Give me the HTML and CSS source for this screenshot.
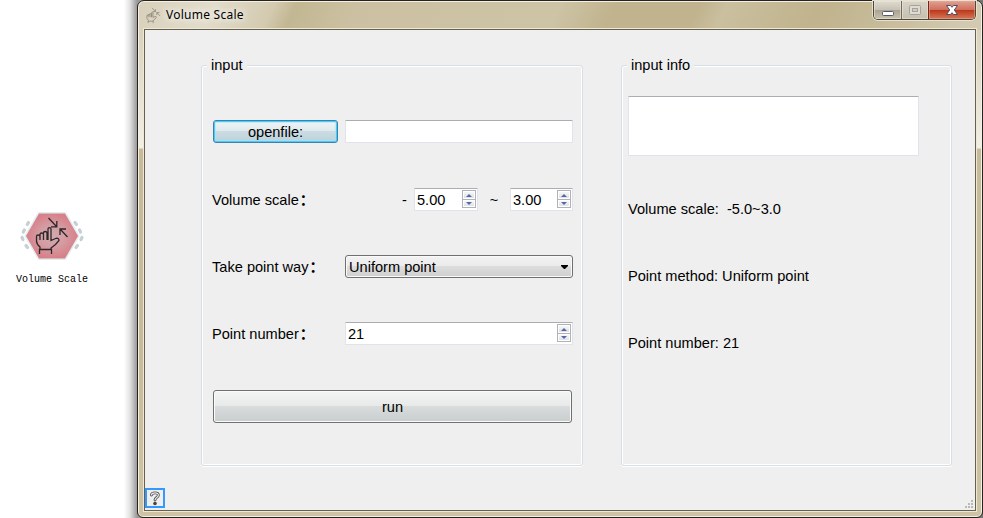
FILE: index.html
```html
<!DOCTYPE html>
<html lang="en">
<head>
<meta charset="utf-8">
<title>Volume Scale</title>
<link rel="stylesheet" href="styles.css">
</head>
<body>
<svg class="defs" width="0" height="0" aria-hidden="true">
  <symbol id="pinch" viewBox="0 0 36 40">
    <g fill="none" stroke="currentColor" stroke-width="1.3">
      <path d="M15.500 2L23.500 10.500M23.800 5V10.800H18"/>
      <path d="M34.500 21L27.500 13.500M27 19V13H33"/>
      <path d="M6.500 38V33.500H18.500V38M7 33.500V31Q3.500 28 3.500 25V20.500Q3.500 19 5.200 19T7 20.500V24M7 20V18.500Q7 17 8.700 17T10.500 18.500V24M10.500 18.500V17Q10.500 15.500 12.200 15.500T14 17V24M15 24V13Q15 11.700 16.500 11.700T18 13V24.500L22.500 22.500Q26 21.500 26 24.500L22.500 28.500 18 32V33.500"/>
    </g>
  </symbol>
</svg>
<div class="desktop">
  <div class="shortcut">
    <svg class="tile" width="70" height="54" viewBox="0 0 70 54">
      <defs>
        <radialGradient id="rose"><stop offset="0" stop-color="#d0abb0"/><stop offset=".5" stop-color="#d49ca2"/><stop offset="1" stop-color="#d87f88"/></radialGradient>
      </defs>
      <path d="M22 4.500H48L61 27 48 49.500H22L9 27Z" fill="#e3edf0" stroke="#e3edf0" stroke-width="3" stroke-linejoin="round"/>
      <path d="M22 4.500H48L61 27 48 49.500H22L9 27Z" fill="url(#rose)"/>
      <g stroke="#c6cfd4" stroke-width="3.200" stroke-linecap="round">
        <path d="M10.300 15.500L11.500 13.500M6.300 23L7.300 21M5 28.500L6 30.500M9 36.500L10.500 38.500M58 13.500L59.500 15.500M62.500 21L63.500 23M64 30.500L65 28.500M59 38.500L60.500 36.500"/>
      </g>
      <svg x="16" y="7" width="36" height="40" color="#2d2728"><use href="#pinch"/></svg>
    </svg>
    <span>Volume Scale</span>
  </div>
  <div class="window">
    <header class="titlebar">
      <svg class="app-icon" width="16" height="17" viewBox="0 0 36 40"><use href="#pinch"/></svg>
      <h1>Volume Scale</h1>
      <div class="controls">
        <span class="min"><svg width="12" height="5"><rect x=".5" y=".5" width="11" height="4" rx="1" fill="#fff" stroke="#555770"/></svg></span>
        <span class="max"><svg width="12" height="10"><rect x=".5" y=".5" width="11" height="9" rx="1" fill="#dddbd2" stroke="#a5a29a"/><rect x="3.500" y="3.500" width="5" height="3" fill="#ceccc2" stroke="#a5a29a"/></svg></span>
        <span class="close"><svg width="12" height="10" viewBox="0 0 12 10"><path d="M0.500 .5H4.500L6 2.300 7.500 .5H11.500L8.300 5 11.500 9.500H7.500L6 7.700 4.500 9.500H.5L3.700 5Z" fill="#fff" stroke="#4d4d61"/></svg></span>
      </div>
    </header>
    <main class="client">
      <section class="group form">
        <h2>input</h2>
        <div class="button open">openfile:</div>
        <div class="field"></div>
        <label>Volume scale<b>：</b></label>
        <div class="range">
          <span class="minus">-</span>
          <div class="field spin"><span>5.00</span><i class="steps"><b class="up"></b><b class="down"></b></i></div>
          <span class="tilde">~</span>
          <div class="field spin"><span>3.00</span><i class="steps"><b class="up"></b><b class="down"></b></i></div>
        </div>
        <label>Take point way<b>：</b></label>
        <div class="button combo"><span>Uniform point</span><svg width="7" height="4"><path d="M0 0H7V1L4 4H3L0 1Z"/></svg></div>
        <label>Point number<b>：</b></label>
        <div class="field spin"><span>21</span><i class="steps"><b class="up"></b><b class="down"></b></i></div>
        <div class="button run">run</div>
      </section>
      <section class="group info">
        <h2>input info</h2>
        <div class="field"></div>
        <p>Volume scale:&nbsp; -5.0~3.0</p>
        <p>Point method: Uniform point</p>
        <p>Point number: 21</p>
      </section>
      <footer class="status">
        <span class="help"><svg width="12" height="15" viewBox="0 0 12 15"><g fill="none" stroke-linecap="round"><path d="M2.500 4Q2.500 1.800 6 1.800T9.300 4.200C9.300 6.500 6 6.500 6 9" stroke="#444" stroke-width="2.800"/><path d="M2.500 4Q2.500 1.800 6 1.800T9.300 4.200C9.300 6.500 6 6.500 6 9" stroke="#eee" stroke-width="1.200"/></g><circle cx="6" cy="12.500" r="1.800" fill="#444"/></svg></span>
        <svg class="grip" width="8" height="8" fill="#b9b9b9"><path d="M6 0h2v2H6zM3 3h2v2H3zM6 3h2v2H6zM0 6h2v2H0zM3 6h2v2H3zM6 6h2v2H6z"/></svg>
      </footer>
    </main>
  </div>
</div>
</body>
</html>
```
FILE: styles.css
```css
* { box-sizing: border-box; }
body { margin: 0; background: #fff; color: #000; font: 14.6px/18px "Liberation Sans", "Noto Sans CJK SC", sans-serif; overflow: hidden; }
h1, h2, p { margin: 0; font-weight: normal; }
svg { display: block; flex: none; }
.defs { position: absolute; }
.desktop { display: grid; grid-template-columns: 137px 846px; height: 518px; background: linear-gradient(to right, #fff 124px, #e2e2e2 130px, #999 137px, #777 100%); }

.shortcut { display: flex; flex-direction: column; align-items: center; padding: 209px 33px 0 0; font: 10px/14px "Liberation Mono", monospace; white-space: nowrap; }
.shortcut span { margin-top: 10px; }

.window {
  display: flex; flex-direction: column; height: 518px; padding: 0 6px 6px; border: 1px solid #25221f; border-radius: 7px 7px 6px 6px;
  box-shadow: inset 0 0 0 1px #f4f0e3;
  background: linear-gradient(115deg, #d8d0ba 0, #e2dccb 70px, #d3cab0 125px, #c2b792 145px, #cbc1a2 200px, #cdc3a5 385px, #c0b38d 435px, #c0b38d 510px, #cabf9f 535px, #c0b38d 620px, #c6bb99 680px, #d2c9b0 760px) 0 0 / 100% 29px no-repeat,
    linear-gradient(#d9d1ba 29px, #f2efe6 147px, #c6ba98 148px, #c8bb99 350px, #cec3a5);
}
.titlebar { display: flex; flex: none; height: 27px; padding-left: 1px; }
.app-icon { margin-top: 6px; color: #6f6c64; }
.titlebar h1 { margin: 5px auto 0 5px; font: 12px/18px "Noto Sans", sans-serif; letter-spacing: .25px; text-shadow: 0 0 7px #fff, 0 0 9px #fff; }
.controls { display: flex; height: 19px; border: 1px solid #4d473d; border-top: 0; border-radius: 0 0 5px 5px; overflow: hidden; box-shadow: 0 0 0 1px #e7e1d0; }
.controls span { display: flex; align-items: center; justify-content: center; background: linear-gradient(#dfdbd0, #c7c2b4 48%, #a9a291 50%, #c9c2ae); box-shadow: inset 0 0 0 1px #ebe7dc99; }
.controls .min { width: 28px; padding-top: 6px; border-right: 1px solid #706a5e; }
.controls .max { width: 27px; border-right: 1px solid #71261a; background: linear-gradient(#d8d3c6, #c5bfaf); }
.controls .close { width: 46px; background: linear-gradient(#e1a093, #d0705c 48%, #b93618 50%, #d67858); box-shadow: inset 0 0 0 1px #eca99488; }

.client { display: grid; grid-template: 401px 1fr / 382px 331px; column-gap: 38px; flex: 1; margin: 1px 0 0; padding: 35px 0 0 56px; background: #efefef; border: 1px solid #66604f; box-shadow: 0 0 0 1px #eee8d6; }
.group { position: relative; border: 1px solid #d5dfe5; border-radius: 3px; box-shadow: inset 0 0 0 1px #fff, 0 1px #fff; }
.group h2 { position: absolute; left: 5px; top: -10px; padding: 0 4px; background: #efefef; font-size: inherit; }

.form { display: grid; grid-template: 68px 67px 67px 68px 33px / 125px 228px; column-gap: 7px; align-content: start; align-items: start; padding: 54px 0 0 11px; }
.form label { margin: 3px 0 0 -1px; white-space: nowrap; }
.form label b { margin-left: 1px; }
.field { height: 23px; background: #fff; border: 1px solid #e2e3ea; border-top-color: #abadb3; border-radius: 1px; }
.spin { display: flex; justify-content: space-between; padding: 1px 1px 1px 2px; }
.spin > span { margin-top: 1px; }
.steps { display: grid; grid-template-rows: 9px 7px; width: 14px; height: 18px; border: 1px solid #b0b2b8; }
.steps b { display: flex; align-items: center; justify-content: center; background: linear-gradient(#fafafa, #dededf); box-shadow: inset 0 0 0 1px #fff; }
.steps .up { border-bottom: 1px solid #b0b2b8; }
.steps b::after { content: ""; border: 3px solid transparent; border-top-width: 0; border-bottom: 3px solid #5268ae; }
.steps .down::after { transform: scaleY(-1); }
.range { display: flex; justify-content: flex-end; }
.range .spin { width: 63px; }
.range .minus + .spin { width: 64px; }
.range > span { margin-top: 3px; }
.minus { width: 12px; }
.tilde { width: 32px; text-align: center; }

.button { height: 23px; border: 1px solid #6f706f; border-radius: 3px; text-align: center; line-height: 22px; background: linear-gradient(#f3f5f4, #e8eaea 48%, #d9dcdc 50%, #c8cdcd); box-shadow: inset 0 0 0 1px #fafcfc; }
.open { border-color: #3c7fb1; background: linear-gradient(#f0f5f6, #dfe9ed 48%, #cbdce3 50%, #bdd1da); box-shadow: inset 0 0 0 1px #48cdf4, inset 0 0 1px 2px #a0e3f588; }
.combo { display: flex; align-items: center; justify-content: space-between; padding: 0 4px 0 3px; background: linear-gradient(#f2f2f2, #ebebeb 48%, #dddddd 50%, #cfcfcf); box-shadow: inset 0 0 0 1px #fafafa; }
.combo span { padding-top: 1px; }
.run { grid-column: 1 / 3; width: 359px; height: 33px; line-height: 32px; }

.info { padding: 30px 0 0 6px; }
.info .field { width: 291px; height: 60px; margin-bottom: 44px; }
.info p { margin-bottom: 49px; }

.status { grid-column: 1 / 3; display: flex; align-items: flex-end; justify-content: space-between; margin-left: -56px; padding: 0 2px 2px 0; width: 830px; }
.help { display: flex; align-items: center; justify-content: center; width: 20px; height: 20px; border: 2px solid #3399ff; }
```
